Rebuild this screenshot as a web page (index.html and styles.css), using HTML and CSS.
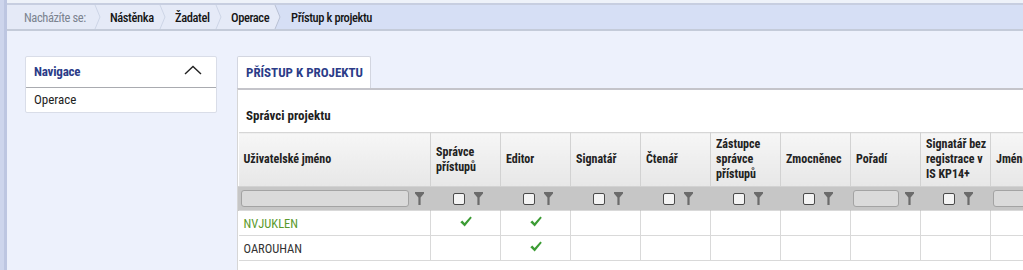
FILE: index.html
```html
<!DOCTYPE html>
<html lang="cs">
<head>
<meta charset="utf-8">
<link rel="stylesheet" href="styles.css">
</head>
<body>
<div class="strip"></div>
<div class="main">
  <div class="topline"></div>
  <nav class="crumbs">
    <span class="crumb lead">Nacházíte se:</span>
    <svg class="sep" width="10" height="24" viewBox="0 0 10 24"><polygon points="0,0 2,0 7,12 2,24 0,24" fill="#e5eaf7"/><polyline points="2,0 7,12 2,24" fill="none" stroke="#cdd5e6" stroke-width="1"/></svg>
    <span class="crumb w-nastenka">Nástěnka</span>
    <svg class="sep" width="10" height="24" viewBox="0 0 10 24"><polygon points="0,0 2,0 7,12 2,24 0,24" fill="#e5eaf7"/><polyline points="2,0 7,12 2,24" fill="none" stroke="#cdd5e6" stroke-width="1"/></svg>
    <span class="crumb w-zadatel">Žadatel</span>
    <svg class="sep" width="10" height="24" viewBox="0 0 10 24"><polygon points="0,0 2,0 7,12 2,24 0,24" fill="#e5eaf7"/><polyline points="2,0 7,12 2,24" fill="none" stroke="#cdd5e6" stroke-width="1"/></svg>
    <span class="crumb w-operace">Operace</span>
    <svg class="sep last" width="10" height="24" viewBox="0 0 10 24"><polygon points="0,0 2,0 7,12 2,24 0,24" fill="#e5eaf7"/><polyline points="2,0 7,12 2,24" fill="none" stroke="#b9c1d4" stroke-width="1"/></svg>
    <span class="crumb current">Přístup k projektu</span>
  </nav>
  <div class="content">
    <aside class="navbox">
      <div class="navhead">
        <span>Navigace</span>
        <svg width="18" height="10" viewBox="0 0 18 10"><polyline points="1,9 9,1.5 17,9" fill="none" stroke="#222" stroke-width="1.4"/></svg>
      </div>
      <div class="navitem">Operace</div>
    </aside>
    <section class="work">
      <div class="tab">PŘÍSTUP K PROJEKTU</div>
      <div class="panel">
        <h2 class="title">Správci projektu</h2>
        <table class="grid">
          <colgroup>
            <col class="c-name"><col class="c-70"><col class="c-70"><col class="c-70"><col class="c-70"><col class="c-70"><col class="c-70"><col class="c-70"><col class="c-70"><col class="c-last">
          </colgroup>
          <thead>
            <tr class="head">
              <th>Uživatelské jméno</th>
              <th>Správce<br>přístupů</th>
              <th>Editor</th>
              <th>Signatář</th>
              <th>Čtenář</th>
              <th>Zástupce<br>správce<br>přístupů</th>
              <th>Zmocněnec</th>
              <th>Pořadí</th>
              <th>Signatář bez<br>registrace v<br>IS KP14+</th>
              <th>Jméno</th>
            </tr>
            <tr class="filter">
              <td><div class="fcell"><span class="finput wide"></span><svg class="funnel" width="9" height="13" viewBox="0 0 9 13"><path d="M0 0H9V1.5L5.6 5.5V13H3.4V5.5L0 1.5Z" fill="#6b6b6b"/></svg></div></td>
              <td><div class="fcell center"><span class="fbox"></span><svg class="funnel" width="9" height="13" viewBox="0 0 9 13"><path d="M0 0H9V1.5L5.6 5.5V13H3.4V5.5L0 1.5Z" fill="#6b6b6b"/></svg></div></td>
              <td><div class="fcell center"><span class="fbox"></span><svg class="funnel" width="9" height="13" viewBox="0 0 9 13"><path d="M0 0H9V1.5L5.6 5.5V13H3.4V5.5L0 1.5Z" fill="#6b6b6b"/></svg></div></td>
              <td><div class="fcell center"><span class="fbox"></span><svg class="funnel" width="9" height="13" viewBox="0 0 9 13"><path d="M0 0H9V1.5L5.6 5.5V13H3.4V5.5L0 1.5Z" fill="#6b6b6b"/></svg></div></td>
              <td><div class="fcell center"><span class="fbox"></span><svg class="funnel" width="9" height="13" viewBox="0 0 9 13"><path d="M0 0H9V1.5L5.6 5.5V13H3.4V5.5L0 1.5Z" fill="#6b6b6b"/></svg></div></td>
              <td><div class="fcell center"><span class="fbox"></span><svg class="funnel" width="9" height="13" viewBox="0 0 9 13"><path d="M0 0H9V1.5L5.6 5.5V13H3.4V5.5L0 1.5Z" fill="#6b6b6b"/></svg></div></td>
              <td><div class="fcell center"><span class="fbox"></span><svg class="funnel" width="9" height="13" viewBox="0 0 9 13"><path d="M0 0H9V1.5L5.6 5.5V13H3.4V5.5L0 1.5Z" fill="#6b6b6b"/></svg></div></td>
              <td><div class="fcell"><span class="finput small"></span><svg class="funnel" width="9" height="13" viewBox="0 0 9 13"><path d="M0 0H9V1.5L5.6 5.5V13H3.4V5.5L0 1.5Z" fill="#6b6b6b"/></svg></div></td>
              <td><div class="fcell center"><span class="fbox"></span><svg class="funnel" width="9" height="13" viewBox="0 0 9 13"><path d="M0 0H9V1.5L5.6 5.5V13H3.4V5.5L0 1.5Z" fill="#6b6b6b"/></svg></div></td>
              <td><div class="fcell"><span class="finput small"></span></div></td>
            </tr>
          </thead>
          <tbody>
            <tr class="row">
              <td class="user green">NVJUKLEN</td>
              <td class="chk"><svg width="12" height="11" viewBox="0 0 12 11"><path d="M0.3 6.3L2.3 4.4L4.6 6.9L10.4 0.4L11.8 1.8L4.7 10.5Z" fill="#3c9c34"/></svg></td>
              <td class="chk"><svg width="12" height="11" viewBox="0 0 12 11"><path d="M0.3 6.3L2.3 4.4L4.6 6.9L10.4 0.4L11.8 1.8L4.7 10.5Z" fill="#3c9c34"/></svg></td>
              <td></td><td></td><td></td><td></td><td></td><td></td><td></td>
            </tr>
            <tr class="row">
              <td class="user">OAROUHAN</td>
              <td></td>
              <td class="chk"><svg width="12" height="11" viewBox="0 0 12 11"><path d="M0.3 6.3L2.3 4.4L4.6 6.9L10.4 0.4L11.8 1.8L4.7 10.5Z" fill="#3c9c34"/></svg></td>
              <td></td><td></td><td></td><td></td><td></td><td></td><td></td>
            </tr>
          </tbody>
        </table>
      </div>
    </section>
  </div>
</div>
</body>
</html>
```
FILE: styles.css
```css
html, body {
  margin: 0;
  padding: 0;
}
body {
  display: flex;
  height: 100vh;
  background: #edf1fc;
  font-family: "Roboto Condensed", "Liberation Sans Narrow", "Arial Narrow", Roboto, sans-serif;
  font-stretch: condensed;
  color: #222;
  overflow: hidden;
}
.strip {
  width: 7px;
  flex-shrink: 0;
  background: linear-gradient(to right, #cdd5ec 0, #cdd5ec 4px, #bdc6e1 4px, #bdc6e1 7px);
}
.main {
  flex: 1;
  min-width: 0;
  overflow: hidden;
}
.topline {
  height: 3px;
  background: #eef2f9;
}
.crumbs {
  display: flex;
  align-items: center;
  height: 24px;
  border-top: 2px solid #c7cee0;
  border-bottom: 2px solid #c4cbd9;
  background: #d6dff5;
  font-size: 12.5px;
  letter-spacing: -0.4px;
  font-weight: 500;
  white-space: nowrap;
}
.crumb {
  display: flex;
  align-items: center;
  box-sizing: border-box;
  flex-shrink: 0;
  height: 24px;
  padding: 0 0 0 7px;
  background: #e5eaf7;
  color: #151515;
}
.crumb.lead {
  width: 86px;
  padding-left: 17px;
  color: #7b838f;
  font-weight: 400;
}
.crumb.w-nastenka { width: 55px; }
.crumb.w-zadatel { width: 46px; }
.crumb.w-operace { width: 49px; }
.crumb.current {
  background: transparent;
  padding-left: 8px;
}
.sep {
  display: block;
  flex-shrink: 0;
  background: #e5eaf7;
}
.sep.last {
  background: #d6dff5;
}
.content {
  display: flex;
  align-items: flex-start;
  gap: 20px;
  padding: 25px 0 0 18px;
}
.navbox {
  width: 192px;
  flex-shrink: 0;
  box-sizing: border-box;
  background: #fff;
  border: 1px solid #d9dde8;
  border-radius: 2px;
  font-size: 13px;
}
.navhead {
  display: flex;
  align-items: center;
  justify-content: space-between;
  height: 30px;
  padding: 0 14px 0 8px;
  border-bottom: 1px solid #a9abb0;
  color: #2b3c88;
  font-weight: bold;
}
.navhead span {
  margin-top: -2px;
  letter-spacing: -0.2px;
}
.navhead svg {
  margin-top: -5px;
}
.navitem {
  height: 24px;
  line-height: 24px;
  padding-left: 8px;
  color: #1e1e1e;
}
.work {
  flex: 1;
  min-width: 0;
}
.tab {
  display: inline-block;
  box-sizing: border-box;
  height: 32px;
  line-height: 32px;
  padding: 0 7px 0 8px;
  background: #fff;
  border: 1px solid #d3d6e0;
  border-bottom: none;
  border-radius: 2px 2px 0 0;
  color: #2b3c88;
  font-weight: bold;
  font-size: 13px;
}
.panel {
  background: #fff;
  border-top: 2px solid #c4c4ca;
  border-left: 1px solid #d6d6d6;
  height: 300px;
  overflow: hidden;
}
.title {
  margin: 0;
  padding: 18px 8px 8px 8px;
  line-height: 16px;
  font-size: 13px;
  font-weight: bold;
  color: #1e1e1e;
}
.grid {
  border-collapse: collapse;
  table-layout: fixed;
  width: 850px;
  font-size: 12px;
}
.c-name { width: 192px; }
.c-70 { width: 70px; }
.c-last { width: 98px; }
.grid th {
  height: 53px;
  padding: 0 5px;
  text-align: left;
  vertical-align: middle;
  font-weight: bold;
  line-height: 15px;
  color: #222;
  white-space: nowrap;
  overflow: hidden;
  background: linear-gradient(#f6f6f6, #e7e7e7);
  border: 1px solid #d2d2d2;
  border-top: 1px solid #d6d6d6;
}
.grid th:first-child { border-left: none; }
.filter td {
  height: 23px;
  padding: 0 2px;
  background: #c6c6c6;
  border-left: 1px solid #c6c6c6;
  border-right: 1px solid #c6c6c6;
}
.fcell {
  display: flex;
  align-items: center;
  gap: 6px;
}
.fcell.center {
  justify-content: center;
  gap: 9px;
  padding-left: 4px;
}
.finput {
  display: block;
  box-sizing: border-box;
  height: 17px;
  background: #dadada;
  border: 1px solid #a3a3a3;
  border-radius: 3px;
}
.finput.wide { width: 168px; }
.finput.small { width: 46px; }
.fbox {
  display: block;
  box-sizing: border-box;
  width: 12px;
  height: 12px;
  background: #f4f4f4;
  border: 1px solid #4a4a4a;
  border-radius: 2px;
}
.funnel { display: block; }
.row td {
  height: 24px;
  padding: 0 5px;
  border: 1px solid #d9d9d9;
  font-size: 12.5px;
  color: #333;
}
.row td:first-child { border-left: none; }
.user.green { color: #5b9a2d; }
.chk {
  text-align: center;
}
.chk svg {
  display: inline-block;
  vertical-align: middle;
  margin-top: -6px;
}
```
